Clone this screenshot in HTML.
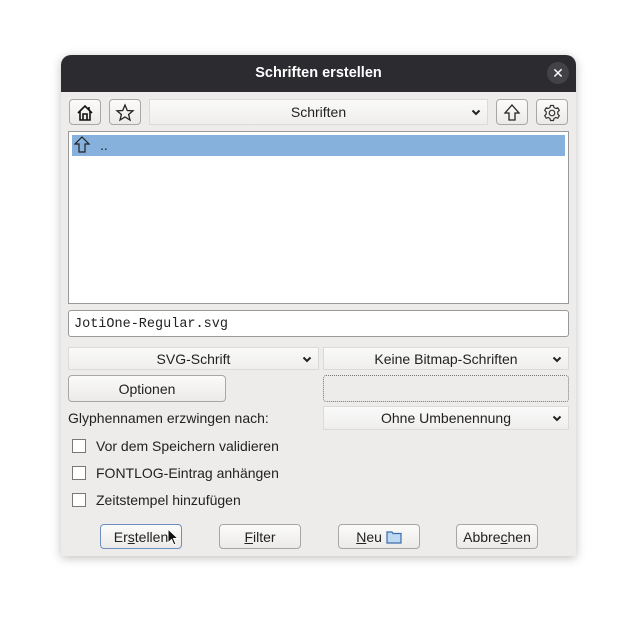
<!DOCTYPE html>
<html><head><style>
*{box-sizing:border-box;margin:0;padding:0}
body{width:637px;height:623px;background:#fff;font-family:"Liberation Sans","DejaVu Sans",sans-serif;font-size:14px;color:#222;position:relative;overflow:hidden}
.dlg{position:absolute;left:61px;top:55px;width:515px;height:501px;background:#edeceb;border-radius:10px 10px 0 0;box-shadow:0 2px 10px rgba(0,0,0,.25);overflow:hidden}
.tb{position:absolute;left:0;top:0;width:515px;height:37px;background:#2c2b2f;color:#fff;font-weight:bold;font-size:14.5px;text-align:center;line-height:37px}
.x{position:absolute;right:7px;top:7px;width:22px;height:22px;border-radius:11px;background:#434246;color:#fff;line-height:22px;font-size:14px}
.a{position:absolute}
.btn{position:absolute;border:1px solid #a9a7a4;border-radius:4px;background:linear-gradient(#fbfbfa,#eceae8);text-align:center;line-height:24px}
.dd{position:absolute;border:1px solid #dcdad7;background:linear-gradient(#fafafa,#efeeec);text-align:center;line-height:22px}
.dd svg{position:absolute;right:6px;top:50%;margin-top:-3px}
.cb{position:absolute;left:11px;width:14px;height:14px;border:1px solid #777;background:#fff}
.lb{position:absolute;left:35px}
u{text-decoration:underline}
</style></head><body>
<div class="dlg">
<div class="tb">Schriften erstellen<div class="x">✕</div></div>
<div class="btn" style="left:8px;top:44px;width:32px;height:26px"><svg width="20" height="20" viewBox="0 0 20 20" style="margin-top:3px"><path d="M3 10 L10 3 L17 10 M5 8 V17 H15 V8 M14 4 V7 M8 17 V11 H12 V17" fill="none" stroke="#111" stroke-width="1.6"/></svg></div>
<div class="btn" style="left:48px;top:44px;width:32px;height:26px"><svg width="20" height="20" viewBox="0 0 20 20" style="margin-top:3px"><path d="M10 2 L12.3 7.5 L18 7.8 L13.6 11.5 L15 17 L10 14 L5 17 L6.4 11.5 L2 7.8 L7.7 7.5Z" fill="none" stroke="#222" stroke-width="1.3"/></svg></div>
<div class="dd" style="left:88px;top:44px;width:339px;height:26px;line-height:24px">Schriften<svg width="10" height="7" viewBox="0 0 10 7"><path d="M1.5 1.5 L5 5 L8.5 1.5" fill="none" stroke="#222" stroke-width="2"/></svg></div>
<div class="btn" style="left:435px;top:44px;width:32px;height:26px"><svg width="20" height="20" viewBox="0 0 20 20" style="margin-top:3px"><path d="M10 2 L17 10 H13 V17 H7 V10 H3Z" fill="none" stroke="#222" stroke-width="1.3"/></svg></div>
<div class="btn" style="left:475px;top:44px;width:32px;height:26px"><svg width="20" height="20" viewBox="0 0 20 20" style="margin-top:3px"><circle cx="10" cy="10" r="2.8" fill="none" stroke="#333" stroke-width="1.2"/><path d="M8.5 2.5h3l.5 2 1.8 1 2-.7 1.5 2.6-1.5 1.4v2.4l1.5 1.4-1.5 2.6-2-.7-1.8 1-.5 2h-3l-.5-2-1.8-1-2 .7-1.5-2.6 1.5-1.4V8.8L2.7 7.4l1.5-2.6 2 .7 1.8-1z" fill="none" stroke="#333" stroke-width="1.2"/></svg></div>
<div class="a" style="left:7px;top:76px;width:501px;height:173px;background:#fff;border:1px solid #999"></div>
<div class="a" style="left:11px;top:80px;width:493px;height:21px;background:#86b1dd"><svg width="16" height="18" viewBox="0 0 16 18" style="position:absolute;left:2px;top:1px"><path d="M8 1 L15 8 H11 V16 H5 V8 H1Z" fill="none" stroke="#222" stroke-width="1.2"/></svg><span style="position:absolute;left:28px;top:2px">..</span></div>
<div class="a" style="left:7px;top:255px;width:501px;height:27px;background:#fff;border:1px solid #999;border-radius:3px;font-family:'Liberation Mono','DejaVu Sans Mono',monospace;font-size:13.5px;line-height:27px;padding-left:5px">JotiOne-Regular.svg</div>
<div class="dd" style="left:7px;top:292px;width:251px;height:23px">SVG-Schrift<svg width="10" height="7" viewBox="0 0 10 7"><path d="M1.5 1.5 L5 5 L8.5 1.5" fill="none" stroke="#222" stroke-width="2"/></svg></div>
<div class="dd" style="left:262px;top:292px;width:246px;height:23px">Keine Bitmap-Schriften<svg width="10" height="7" viewBox="0 0 10 7"><path d="M1.5 1.5 L5 5 L8.5 1.5" fill="none" stroke="#222" stroke-width="2"/></svg></div>
<div class="btn" style="left:7px;top:320px;width:158px;height:27px;line-height:26px">Optionen</div>
<div class="a" style="left:262px;top:320px;width:246px;height:27px;border:1px dotted #777;border-radius:3px"></div>
<div class="a" style="left:7px;top:355px">Glyphennamen erzwingen nach:</div>
<div class="dd" style="left:262px;top:351px;width:246px;height:24px">Ohne Umbenennung<svg width="10" height="7" viewBox="0 0 10 7"><path d="M1.5 1.5 L5 5 L8.5 1.5" fill="none" stroke="#222" stroke-width="2"/></svg></div>
<div class="cb" style="top:384px"></div><div class="lb" style="top:383px">Vor dem Speichern validieren</div>
<div class="cb" style="top:411px"></div><div class="lb" style="top:410px">FONTLOG-Eintrag anhängen</div>
<div class="cb" style="top:438px"></div><div class="lb" style="top:437px">Zeitstempel hinzufügen</div>
<div class="btn" style="left:39px;top:469px;width:82px;height:25px;border-color:#6d8fbf">Er<u>s</u>tellen</div>
<div class="btn" style="left:158px;top:469px;width:82px;height:25px"><u>F</u>ilter</div>
<div class="btn" style="left:277px;top:469px;width:82px;height:25px"><u>N</u>eu <svg width="16" height="14" viewBox="0 0 16 14" style="vertical-align:-2px"><path d="M1 2h5l1 1.5h8V13H1Z" fill="#bcd8f2" stroke="#3a6ea8" stroke-width="1.2"/></svg></div>
<div class="btn" style="left:395px;top:469px;width:82px;height:25px">Abbre<u>c</u>hen</div>
</div>
<svg width="14" height="20" viewBox="0 0 14 20" style="position:absolute;left:167px;top:528px"><path d="M1 1 V15 L4.5 11.5 L7 17 L9 16 L6.5 10.5 H11Z" fill="#111" stroke="#fff" stroke-width="1"/></svg>
</body></html>
